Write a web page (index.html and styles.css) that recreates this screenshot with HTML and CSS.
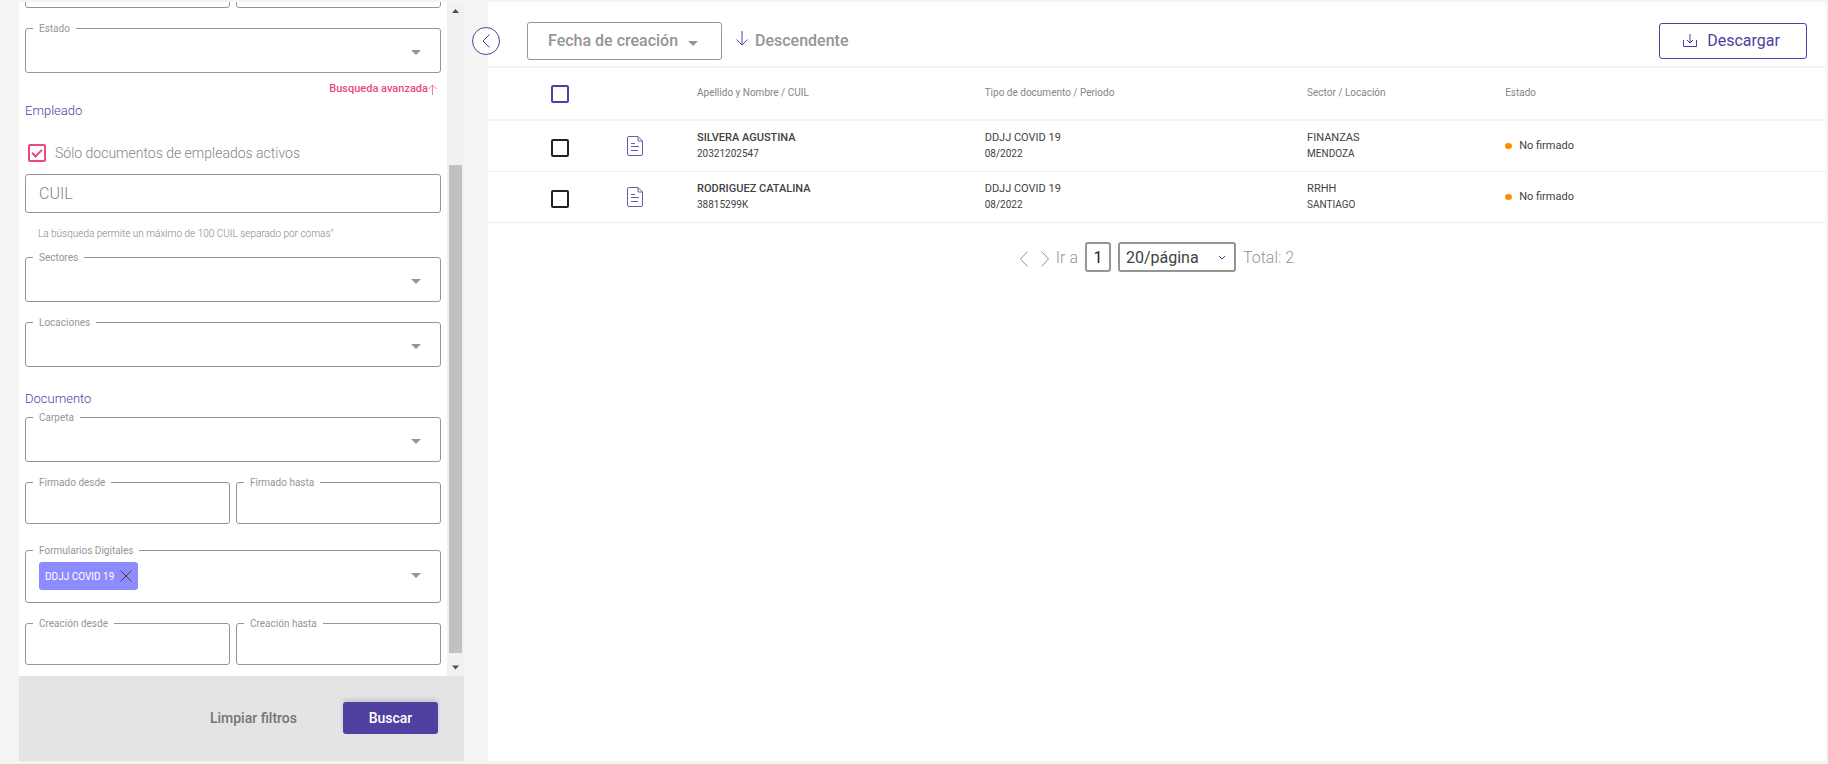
FILE: index.html
```html
<!DOCTYPE html>
<html lang="es">
<head>
  <meta charset="UTF-8">
  <title>Documentos</title>
  <meta name="viewport" content="width=device-width, initial-scale=1.0">
  <link rel="stylesheet" href="styles.css">
</head>
<body>

  <div class="layout">

    <form class="sidebar">
      <div class="scroll">
        <div class="filters">
          <div class="row">
            <fieldset class="field"><input type="text" aria-label="Desde"></fieldset>
            <fieldset class="field"><input type="text" aria-label="Hasta"></fieldset>
          </div>

          <fieldset class="field field-select">
            <legend><label for="estado">Estado</label></legend>
            <select id="estado"><option></option></select>
            <svg class="caret" viewBox="0 0 10 5"><path d="M0 0h10L5 5z"/></svg>
          </fieldset>

          <a href="#" class="advanced">Busqueda avanzada<svg viewBox="0 0 9 11"><path d="M4.5 11V1M.5 5l4-4 4 4"/></svg></a>

          <h3>Empleado</h3>
          <label class="active-only">
            <input type="checkbox" class="check check-pink" checked>
            Sólo documentos de empleados activos
          </label>
          <fieldset class="field field-cuil">
            <input type="text" id="cuil" placeholder="CUIL" aria-label="CUIL">
          </fieldset>
          <p class="hint">La búsqueda permite un máximo de 100 CUIL separado por comas"</p>

          <fieldset class="field field-select">
            <legend><label for="sectores">Sectores</label></legend>
            <select id="sectores"><option></option></select>
            <svg class="caret" viewBox="0 0 10 5"><path d="M0 0h10L5 5z"/></svg>
          </fieldset>
          <fieldset class="field field-select spaced">
            <legend><label for="locaciones">Locaciones</label></legend>
            <select id="locaciones"><option></option></select>
            <svg class="caret" viewBox="0 0 10 5"><path d="M0 0h10L5 5z"/></svg>
          </fieldset>

          <h3 class="title-doc">Documento</h3>
          <fieldset class="field field-select">
            <legend><label for="carpeta">Carpeta</label></legend>
            <select id="carpeta"><option></option></select>
            <svg class="caret" viewBox="0 0 10 5"><path d="M0 0h10L5 5z"/></svg>
          </fieldset>
          <div class="row spaced">
            <fieldset class="field">
              <legend><label for="firmadoDesde">Firmado desde</label></legend>
              <input type="text" id="firmadoDesde">
            </fieldset>
            <fieldset class="field">
              <legend><label for="firmadoHasta">Firmado hasta</label></legend>
              <input type="text" id="firmadoHasta">
            </fieldset>
          </div>

          <fieldset class="field field-select field-tags">
            <legend><label for="formularios">Formularios Digitales</label></legend>
            <div class="tags">
              <span class="chip">DDJJ COVID 19
                <button type="button" aria-label="Quitar"><svg viewBox="0 0 12 12"><path d="M.5.5l11 11M11.5.5l-11 11"/></svg></button>
              </span>
              <select id="formularios"><option></option></select>
            </div>
            <svg class="caret" viewBox="0 0 10 5"><path d="M0 0h10L5 5z"/></svg>
          </fieldset>
          <div class="row spaced">
            <fieldset class="field">
              <legend><label for="creacionDesde">Creación desde</label></legend>
              <input type="text" id="creacionDesde">
            </fieldset>
            <fieldset class="field">
              <legend><label for="creacionHasta">Creación hasta</label></legend>
              <input type="text" id="creacionHasta">
            </fieldset>
          </div>
        </div>

        <div class="scrollbar">
          <svg viewBox="0 0 17 17"><path d="M5 11l3.500-4 3.500 4z"/></svg>
          <div class="track"><div class="thumb"></div></div>
          <svg viewBox="0 0 17 17"><path d="M5 6.500l3.500 4 3.500-4z"/></svg>
        </div>
      </div>

      <div class="actions">
        <button type="reset" class="btn-clear">Limpiar filtros</button>
        <button type="submit" class="btn-search">Buscar</button>
      </div>
    </form>

    <main class="content">
      <button class="collapse" aria-label="Ocultar filtros">
        <svg viewBox="0 0 8 14"><path d="M7.500.5L1 7l6.500 6.500"/></svg>
      </button>

      <div class="toolbar">
        <div class="sort">
          <select aria-label="Ordenar por"><option>Fecha de creación</option></select>
          <svg class="caret" viewBox="0 0 10 5"><path d="M0 0h10L5 5z"/></svg>
        </div>
        <button class="order">
          <svg viewBox="0 0 12 15"><path d="M6 0v14M.5 8.500L6 14l5.500-5.500"/></svg>
          Descendente
        </button>
        <button class="download">
          <svg viewBox="0 0 14 13"><path d="M.5 6v6.500h13V6M7 0v9M4 6l3 3 3-3"/></svg>
          Descargar
        </button>
      </div>

      <table>
        <colgroup>
          <col class="col-check">
          <col class="col-icon">
          <col class="col-name">
          <col class="col-type">
          <col class="col-sector">
          <col>
        </colgroup>
        <thead>
          <tr>
            <th class="cell-check"><input type="checkbox" class="check check-purple" aria-label="Seleccionar todos"></th>
            <th></th>
            <th>Apellido y Nombre / CUIL</th>
            <th>Tipo de documento / Periodo</th>
            <th>Sector / Locación</th>
            <th>Estado</th>
          </tr>
        </thead>
        <tbody>
          <tr>
            <td class="cell-check"><input type="checkbox" class="check" aria-label="Silvera Agustina"></td>
            <td><svg class="doc" viewBox="0 0 16 20"><path d="M11 .5H2A1.500 1.500 0 0 0 .5 2v16A1.500 1.500 0 0 0 2 19.500h12a1.500 1.500 0 0 0 1.500-1.500V5z"/><path d="M11 .5V5h4.500M4 7.500h4M4 10.500h8M4 14.500h7"/></svg></td>
            <td><strong>SILVERA AGUSTINA</strong><small>20321202547</small></td>
            <td><span>DDJJ COVID 19</span><small>08/2022</small></td>
            <td><span>FINANZAS</span><small>MENDOZA</small></td>
            <td><span class="status">No firmado</span></td>
          </tr>
          <tr>
            <td class="cell-check"><input type="checkbox" class="check" aria-label="Rodriguez Catalina"></td>
            <td><svg class="doc" viewBox="0 0 16 20"><path d="M11 .5H2A1.500 1.500 0 0 0 .5 2v16A1.500 1.500 0 0 0 2 19.500h12a1.500 1.500 0 0 0 1.500-1.500V5z"/><path d="M11 .5V5h4.500M4 7.500h4M4 10.500h8M4 14.500h7"/></svg></td>
            <td><strong>RODRIGUEZ CATALINA</strong><small>38815299K</small></td>
            <td><span>DDJJ COVID 19</span><small>08/2022</small></td>
            <td><span>RRHH</span><small>SANTIAGO</small></td>
            <td><span class="status">No firmado</span></td>
          </tr>
        </tbody>
      </table>

      <div class="pager">
        <button class="page-arrow" aria-label="Anterior"><svg viewBox="0 0 8 16"><path d="M7.500.5L.5 8l7 7.500"/></svg></button>
        <button class="page-arrow" aria-label="Siguiente"><svg viewBox="0 0 8 16"><path d="M.5.5l7 7.500-7 7.500"/></svg></button>
        <label for="pagina">Ir a</label>
        <input type="text" id="pagina" value="1">
        <div class="page-size">
          <select aria-label="Resultados por página"><option>20/página</option></select>
          <svg viewBox="0 0 8 5"><path d="M1 1l3 3 3-3"/></svg>
        </div>
        <span>Total: 2</span>
      </div>
    </main>

  </div>

</body>
</html>
```

FILE: styles.css
```css
* {
  box-sizing: border-box;
}
body {
  margin: 0;
  background: #f4f4f4;
  color: #424242;
  font-family: Roboto, sans-serif;
}
button, input, select {
  margin: 0;
  padding: 0;
  border: 0;
  background: none;
  color: inherit;
  font: inherit;
  appearance: none;
}
button, select {
  cursor: pointer;
}
svg {
  display: block;
  fill: none;
  stroke: currentColor;
}
.layout {
  display: flex;
  gap: 24px;
  height: 100vh;
  padding: 2px 2px 3px 19px;
}

/* filters */
.sidebar {
  display: flex;
  flex-direction: column;
  flex: 0 0 445px;
  background: #fff;
}
.scroll {
  display: flex;
  flex: 1;
  min-height: 0;
}
.filters {
  display: flex;
  flex-direction: column;
  justify-content: flex-end;
  flex: 1;
  overflow: hidden;
  padding: 0 6px 11px;
}
.filters > * {
  flex-shrink: 0;
}
.row {
  display: flex;
  gap: 6px;
}
.field {
  position: relative;
  flex: 1;
  min-width: 0;
  height: 42px;
  margin: 0;
  padding: 0;
  border: 1px solid #959595;
  border-radius: 3px;
}
.field legend {
  margin-left: 7px;
  padding: 0 6px;
  color: #959595;
  font-size: 10px;
  line-height: 1px;
}
.field input, .field select {
  display: block;
  width: 100%;
  height: 38px;
  padding: 0 13px;
}
.filters > .field {
  flex: none;
}
.field-select {
  height: 45px;
}
.row + .field-select, .spaced {
  margin-top: 20px;
}
.caret {
  position: absolute;
  top: 50%;
  right: 19px;
  width: 10px;
  height: 5px;
  fill: #959595;
  stroke: none;
  pointer-events: none;
}
.field .caret {
  margin-top: 2px;
}
.advanced {
  display: flex;
  align-items: center;
  align-self: flex-end;
  margin: 9px 4px 0 0;
  color: #e84a7a;
  font-size: 11px;
  font-weight: 500;
  line-height: 14px;
  text-decoration: none;
}
.advanced svg {
  width: 9px;
  height: 11px;
  opacity: .7;
}
h3 {
  margin: 7px 0 0;
  color: #4f40a1;
  font-size: 13px;
  font-weight: 300;
  line-height: 16px;
}
.active-only {
  display: flex;
  align-items: center;
  gap: 9px;
  margin: 24px 0 11px 3px;
  color: #858585;
  font-size: 14px;
  font-weight: 300;
  line-height: 20px;
}
.check {
  display: block;
  width: 18px;
  height: 18px;
  border: 2px solid #212121;
  border-radius: 2px;
}
.check-purple {
  border-color: #4f40a1;
}
.check-pink {
  border-color: #e84a7a;
}
.check:checked::before {
  content: "";
  display: block;
  width: 8px;
  height: 4px;
  margin: 3px 2px;
  border: solid #e84a7a;
  border-width: 0 0 2px 2px;
  transform: rotate(-45deg);
}
.field-cuil {
  height: 39px;
}
.field-cuil input::placeholder {
  color: #858585;
  opacity: 1;
}
.field-cuil input {
  height: 37px;
  font-size: 16px;
  font-weight: 300;
}
.hint {
  margin: 14px 13px 16px;
  color: #858585;
  font-size: 10px;
  font-weight: 300;
  line-height: 14px;
}
.title-doc {
  margin: 24px 0 10px;
}
.row + .field-tags {
  height: 53px;
  margin-top: 26px;
}
.tags {
  display: flex;
  padding: 11px 13px 0;
}
.chip {
  display: flex;
  align-items: center;
  gap: 6px;
  flex: none;
  height: 28px;
  padding: 0 6px;
  border-radius: 3px;
  background: #8c8cff;
  color: #fff;
  font-size: 10px;
}
.chip svg {
  width: 12px;
  height: 12px;
  color: #424242;
}
.tags select {
  flex: 1;
  height: 28px;
}

.scrollbar {
  display: flex;
  flex-direction: column;
  flex: 0 0 17px;
  background: #f1f1f1;
}
.scrollbar svg {
  width: 17px;
  height: 17px;
  fill: #505050;
  stroke: none;
}
.track {
  display: flex;
  flex-direction: column;
  justify-content: flex-end;
  flex: 1;
  padding: 0 2px 6px;
}
.thumb {
  height: 77%;
  background: #c1c1c1;
}
.actions {
  display: flex;
  justify-content: flex-end;
  gap: 46px;
  padding: 26px 26px 27px;
  background: #e4e4e4;
  font-size: 14px;
  font-weight: 500;
}
.btn-clear {
  color: #757575;
}
.btn-search {
  width: 95px;
  height: 32px;
  border-radius: 3px;
  background: #4f40a1;
  box-shadow: 0 -3px 4px rgba(0, 0, 0, .12);
  color: #fff;
}

/* documents */
.content {
  position: relative;
  flex: 1;
  min-width: 0;
  background: #fff;
}
.collapse {
  position: absolute;
  top: 25px;
  left: -16px;
  display: flex;
  align-items: center;
  justify-content: center;
  width: 28px;
  height: 28px;
  border: 1px solid #4f40a1;
  border-radius: 50%;
  background: #fff;
  color: #4f40a1;
}
.collapse svg {
  width: 8px;
  height: 14px;
}
.toolbar {
  display: flex;
  align-items: center;
  height: 66px;
  padding: 14px 19px 0 39px;
  border-bottom: 2px solid #f4f4f4;
  font-size: 16px;
}
.sort {
  position: relative;
  color: #959595;
  font-weight: 500;
}
.sort select {
  width: 195px;
  height: 38px;
  padding: 0 20px 2px;
  border: 1px solid #959595;
  border-radius: 3px;
}
.sort .caret {
  right: 24px;
}
.order {
  display: flex;
  align-items: center;
  gap: 7px;
  margin-left: 14px;
  padding-bottom: 2px;
  color: #959595;
  font-weight: 500;
}
.order svg {
  width: 12px;
  height: 15px;
  margin-bottom: 4px;
  color: #4f40a1;
}
.download {
  display: flex;
  align-items: center;
  justify-content: center;
  gap: 10px;
  width: 148px;
  height: 36px;
  margin-left: auto;
  padding: 0 3px 2px 0;
  border: 1px solid #4f40a1;
  border-radius: 3px;
  color: #4f40a1;
}
.download svg {
  width: 14px;
  height: 13px;
}
table {
  width: 100%;
  border-collapse: separate;
  border-spacing: 0;
  table-layout: fixed;
}
.col-check {
  width: 139px;
}
.col-icon {
  width: 70px;
}
.col-name {
  width: 21.5%;
}
.col-type {
  width: 24.1%;
}
.col-sector {
  width: 14.8%;
}
th {
  height: 53px;
  padding: 0 0 2px;
  border-bottom: 2px solid #f4f4f4;
  color: #858585;
  font-size: 10px;
  font-weight: 400;
  text-align: left;
}
td {
  height: 51px;
  padding: 0;
  border-bottom: 1px solid #e9eff4;
  font-size: 11px;
  line-height: 16px;
}
td strong, td span, td small {
  display: block;
}
td strong {
  font-weight: 500;
}
td small {
  font-size: 10px;
}
.cell-check {
  padding: 3px 0 0 63px;
}
th.cell-check {
  padding-top: 0;
}
.doc {
  width: 16px;
  height: 20px;
  color: #6a5bb0;
}
td .status {
  display: flex;
  align-items: center;
  gap: 7px;
}
.status::before {
  content: "";
  width: 7px;
  height: 6px;
  border-radius: 50%;
  background: #ff8c00;
}
.pager {
  display: flex;
  align-items: center;
  justify-content: center;
  gap: 7px;
  margin-top: 19px;
  color: #959595;
  font-size: 16px;
  font-weight: 300;
}
.page-arrow {
  padding-top: 3px;
}
.page-arrow + .page-arrow {
  margin-left: 6px;
}
.page-arrow svg {
  width: 8px;
  height: 16px;
}
.pager input, .pager select {
  height: 30px;
  border: 2px solid #959595;
  border-radius: 3px;
  color: #212121;
  font-weight: 400;
}
.pager input {
  width: 26px;
  text-align: center;
}
.page-size {
  position: relative;
}
.page-size select {
  width: 118px;
  padding: 0 6px;
  color: #424242;
}
.page-size svg {
  position: absolute;
  top: 13px;
  right: 10px;
  width: 8px;
  height: 5px;
  color: #4f40a1;
  pointer-events: none;
}
```
